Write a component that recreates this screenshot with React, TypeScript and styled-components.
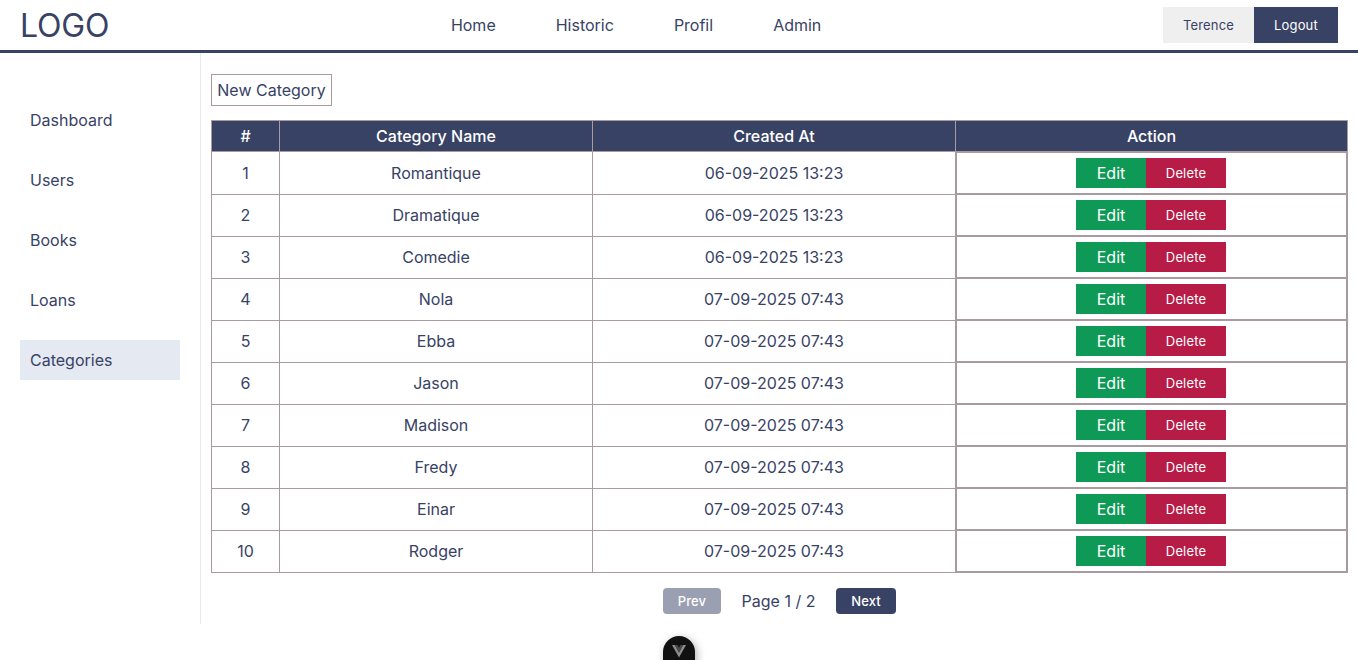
import React from "react";
import styled, { createGlobalStyle } from "styled-components";

const navy = "#384265";
const line = "#a89ba0";

const GlobalStyle = createGlobalStyle`
  *, *::before, *::after { box-sizing: border-box; }
  html, body { margin: 0; padding: 0; }
  body {
    height: 660px;
    overflow: hidden;
    background: #fff;
    color: ${navy};
    font-family: Inter, sans-serif;
    font-size: 16px;
    font-weight: 400;
  }
  button { font-family: inherit; border: none; padding: 0; cursor: pointer; }
`;

const Header = styled.header`
  display: flex;
  align-items: center;
  justify-content: space-between;
  height: 53px;
  padding: 0 20px;
  border-bottom: 3px solid ${navy};
`;

const Logo = styled.div`
  padding-top: 2px;
  font-size: 32px;
  font-weight: 400;
  letter-spacing: -0.2px;
  line-height: 48px;
`;

const Nav = styled.nav`
  display: flex;
  gap: 60px;
  line-height: 50px;
`;

const Account = styled.div`
  display: flex;
  height: 36px;
`;

const AccountButton = styled.button<{ $primary?: boolean }>`
  width: ${(p) => (p.$primary ? 84 : 91)}px;
  font-size: 13px;
  letter-spacing: 0.15px;
  font-weight: 400;
  background: ${(p) => (p.$primary ? navy : "#efefef")};
  color: ${(p) => (p.$primary ? "#fff" : navy)};
`;

const Body = styled.div`
  display: flex;
  height: 571px;
`;

const Sidebar = styled.aside`
  display: flex;
  flex-direction: column;
  gap: 20px;
  flex: 0 0 201px;
  padding: 47px 20px 0;
  border-right: 1px solid #e4e9f2;
`;

const SideLink = styled.a<{ $active?: boolean }>`
  height: 40px;
  padding: 0 10px;
  line-height: 40px;
  background: ${(p) => (p.$active ? "#e4e9f2" : "transparent")};
`;

const Main = styled.main`
  flex: 1;
  padding: 21px 10px 0;
`;

const NewButton = styled.button`
  display: block;
  width: 121px;
  height: 32px;
  margin-bottom: 14px;
  border: 1px solid ${line};
  background: #fff;
  color: ${navy};
  font-size: 16px;
  font-weight: 400;
  white-space: nowrap;
`;

const Table = styled.table`
  width: 1137px;
  table-layout: fixed;
  border-collapse: separate;
  border-spacing: 0;
  border: 1px solid ${line};
  text-align: center;
`;

const HeadCell = styled.th`
  height: 31px;
  padding: 0;
  background: ${navy};
  color: #fff;
  font-weight: 500;
  border-bottom: 1px solid ${line};
  &:not(:last-child) { border-right: 1px solid ${line}; }
`;

const Row = styled.tr`
  height: 42px;
`;

const Cell = styled.td`
  height: 42px;
  padding: 0;
  border-right: 1px solid ${line};
  ${Row}:not(:first-child) & {
    padding-bottom: 1px;
    border-top: 1px solid ${line};
  }
`;

const ActionCell = styled.td`
  padding: 0;
`;

const Actions = styled.div`
  display: flex;
  justify-content: center;
  height: 42px;
  padding: 5px 6px 5px 5px;
  border: 1px solid ${line};
`;

const EditButton = styled.button`
  width: 70px;
  height: 30px;
  background: #0f9957;
  color: #fff;
  font-size: 16px;
  font-weight: 400;
`;

const DeleteButton = styled(EditButton)`
  width: 80px;
  background: #b71c47;
  font-size: 13px;
  letter-spacing: 0.15px;
`;

const Pager = styled.div`
  display: flex;
  align-items: center;
  justify-content: center;
  height: 26px;
  margin-top: 15px;
`;

const PageButton = styled.button<{ $width: number }>`
  width: ${(p) => p.$width}px;
  height: 26px;
  border-radius: 4px;
  background: ${navy};
  color: #fff;
  font-size: 13px;
  letter-spacing: 0.1px;
  font-weight: 500;
  &:disabled { opacity: 0.5; }
`;

const PageLabel = styled.span`
  width: 115px;
  text-align: center;
`;

const DevBadge = styled.div`
  position: fixed;
  left: 663px;
  top: 636px;
  width: 32px;
  height: 40px;
  padding-top: 9px;
  border-radius: 16px;
  background: #111;
  box-shadow: 2px 2px 8px rgba(0, 0, 0, 0.3);
  svg { display: block; margin: 0 auto; }
`;

const sections = ["Dashboard", "Users", "Books", "Loans", "Categories"];

const categories: [string, string][] = [
  ["Romantique", "06-09-2025 13:23"],
  ["Dramatique", "06-09-2025 13:23"],
  ["Comedie", "06-09-2025 13:23"],
  ["Nola", "07-09-2025 07:43"],
  ["Ebba", "07-09-2025 07:43"],
  ["Jason", "07-09-2025 07:43"],
  ["Madison", "07-09-2025 07:43"],
  ["Fredy", "07-09-2025 07:43"],
  ["Einar", "07-09-2025 07:43"],
  ["Rodger", "07-09-2025 07:43"],
];

export default function App() {
  return (
    <>
      <GlobalStyle />
      <Header>
        <Logo>LOGO</Logo>
        <Nav>
          {["Home", "Historic", "Profil", "Admin"].map((n) => (
            <a key={n}>{n}</a>
          ))}
        </Nav>
        <Account>
          <AccountButton>Terence</AccountButton>
          <AccountButton $primary>Logout</AccountButton>
        </Account>
      </Header>
      <Body>
        <Sidebar>
          {sections.map((s) => (
            <SideLink key={s} $active={s === "Categories"}>
              {s}
            </SideLink>
          ))}
        </Sidebar>
        <Main>
          <NewButton>New Category</NewButton>
          <Table>
            <colgroup>
              <col width={68} />
              <col width={313} />
              <col width={363} />
              <col width={391} />
            </colgroup>
            <thead>
              <tr>
                <HeadCell>#</HeadCell>
                <HeadCell>Category Name</HeadCell>
                <HeadCell>Created At</HeadCell>
                <HeadCell>Action</HeadCell>
              </tr>
            </thead>
            <tbody>
              {categories.map(([name, date], i) => (
                <Row key={name}>
                  <Cell>{i + 1}</Cell>
                  <Cell>{name}</Cell>
                  <Cell>{date}</Cell>
                  <ActionCell>
                    <Actions>
                      <EditButton>Edit</EditButton>
                      <DeleteButton>Delete</DeleteButton>
                    </Actions>
                  </ActionCell>
                </Row>
              ))}
            </tbody>
          </Table>
          <Pager>
            <PageButton $width={58} disabled>Prev</PageButton>
            <PageLabel>Page 1 / 2</PageLabel>
            <PageButton $width={60}>Next</PageButton>
          </Pager>
        </Main>
      </Body>
      <DevBadge>
        <svg width="14" height="13" viewBox="0 0 14 13">
          <path d="M0 0h2.8L7 7.4 11.200 0H14L7 12.500z" fill="#8d8d8d" />
          <path d="M2.800 0h2.700L7 2.700 8.500 0h2.700L7 7.400z" fill="#4b4b4b" />
        </svg>
      </DevBadge>
    </>
  );
}
